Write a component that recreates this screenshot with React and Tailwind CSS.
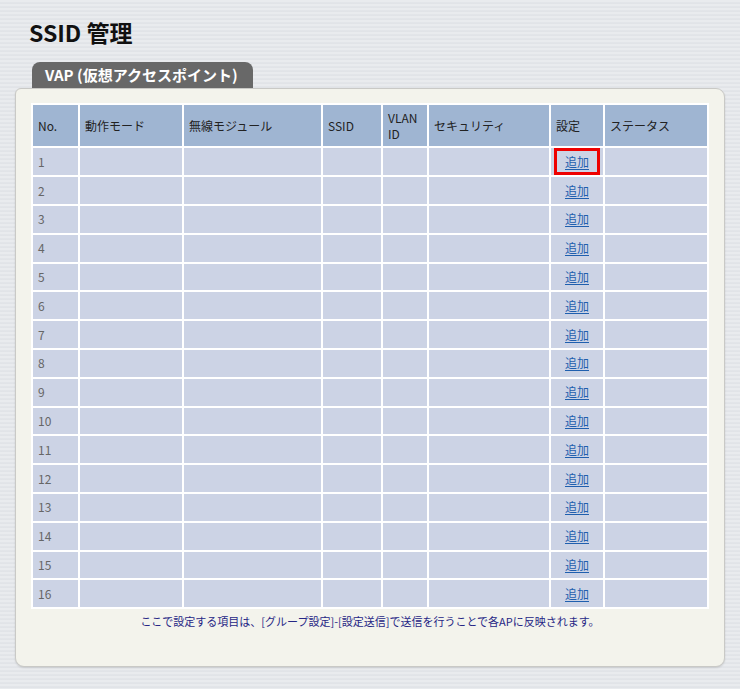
const columns = [
  { label: 'No.', w: 'w-[47px]' },
  { label: '動作モード', w: 'w-[104px]' },
  { label: '無線モジュール', w: 'w-[139px]' },
  { label: 'SSID', w: 'w-[60px]' },
  { label: 'VLAN ID', w: 'w-[46px]' },
  { label: 'セキュリティ', w: 'w-[122px]' },
  { label: '設定', w: 'w-[54px]' },
  { label: 'ステータス', w: '' },
]

const rows = Array.from({ length: 16 }, (_, i) => i + 1)

function AddLink({ highlighted }) {
  const link = (
    <a href="#" className="text-[#1f5fae] underline underline-offset-2 text-[12px]">
      追加
    </a>
  )
  if (!highlighted) return link
  return (
    <span className="inline-flex items-center justify-center w-[46px] h-[27px] border-[3px] border-[#ee0000] align-middle">
      {link}
    </span>
  )
}

export default function App() {
  return (
    <div
      className="min-h-[689px] w-[740px] bg-[#e3e5e9] bg-[repeating-linear-gradient(180deg,#e9ebee_0px,#e9ebee_2px,#dcdfe4_3px,#e6e8eb_4px)] pt-[18px] pb-[22px]"
      style={{ fontFamily: '"Noto Sans CJK JP", "Liberation Sans", sans-serif' }}
    >
      <h1 className="pl-[29px] text-[23px] font-bold leading-[28px] text-[#111]">SSID 管理</h1>

      <div className="mt-[16px] pl-[32px]">
        <div className="inline-flex items-center h-[26px] w-[221px] rounded-t-[8px] bg-[#686868] pl-[13px] text-[15px] font-bold text-white">
          VAP (仮想アクセスポイント)
        </div>
      </div>

      <div className="mx-[15px] h-[579px] rounded-[9px] rounded-tl-[6px] border border-[#c9c9c6] bg-[#f3f3ec] px-[15px] pt-[14px] shadow-[0_1px_2px_rgba(0,0,0,0.12)]">
        <table className="w-[678px] border-collapse text-[12px]">
          <thead>
            <tr>
              {columns.map((c) => (
                <th
                  key={c.label}
                  className={`${c.w} h-[43px] border-2 border-white bg-[#9fb5d2] px-[5px] text-left align-middle font-normal leading-[16px] text-[#222]`}
                >
                  {c.label === 'VLAN ID' ? (
                    <>
                      VLAN
                      <br />
                      ID
                    </>
                  ) : (
                    c.label
                  )}
                </th>
              ))}
            </tr>
          </thead>
          <tbody>
            {rows.map((n) => (
              <tr key={n}>
                {columns.map((c, ci) => (
                  <td
                    key={c.label}
                    className={`h-[28.8px] border-2 border-white bg-[#ccd3e5] leading-[14px] text-[#666] ${ci === 6 ? 'text-center p-0' : 'px-[5px]'}`}
                  >
                    {ci === 0 ? n : ci === 6 ? <AddLink highlighted={n === 1} /> : null}
                  </td>
                ))}
              </tr>
            ))}
          </tbody>
        </table>
        <p className="mt-[4px] text-center text-[11px] text-[#262685]">
          ここで設定する項目は、[グループ設定]-[設定送信]で送信を行うことで各APに反映されます。
        </p>
      </div>
    </div>
  )
}
